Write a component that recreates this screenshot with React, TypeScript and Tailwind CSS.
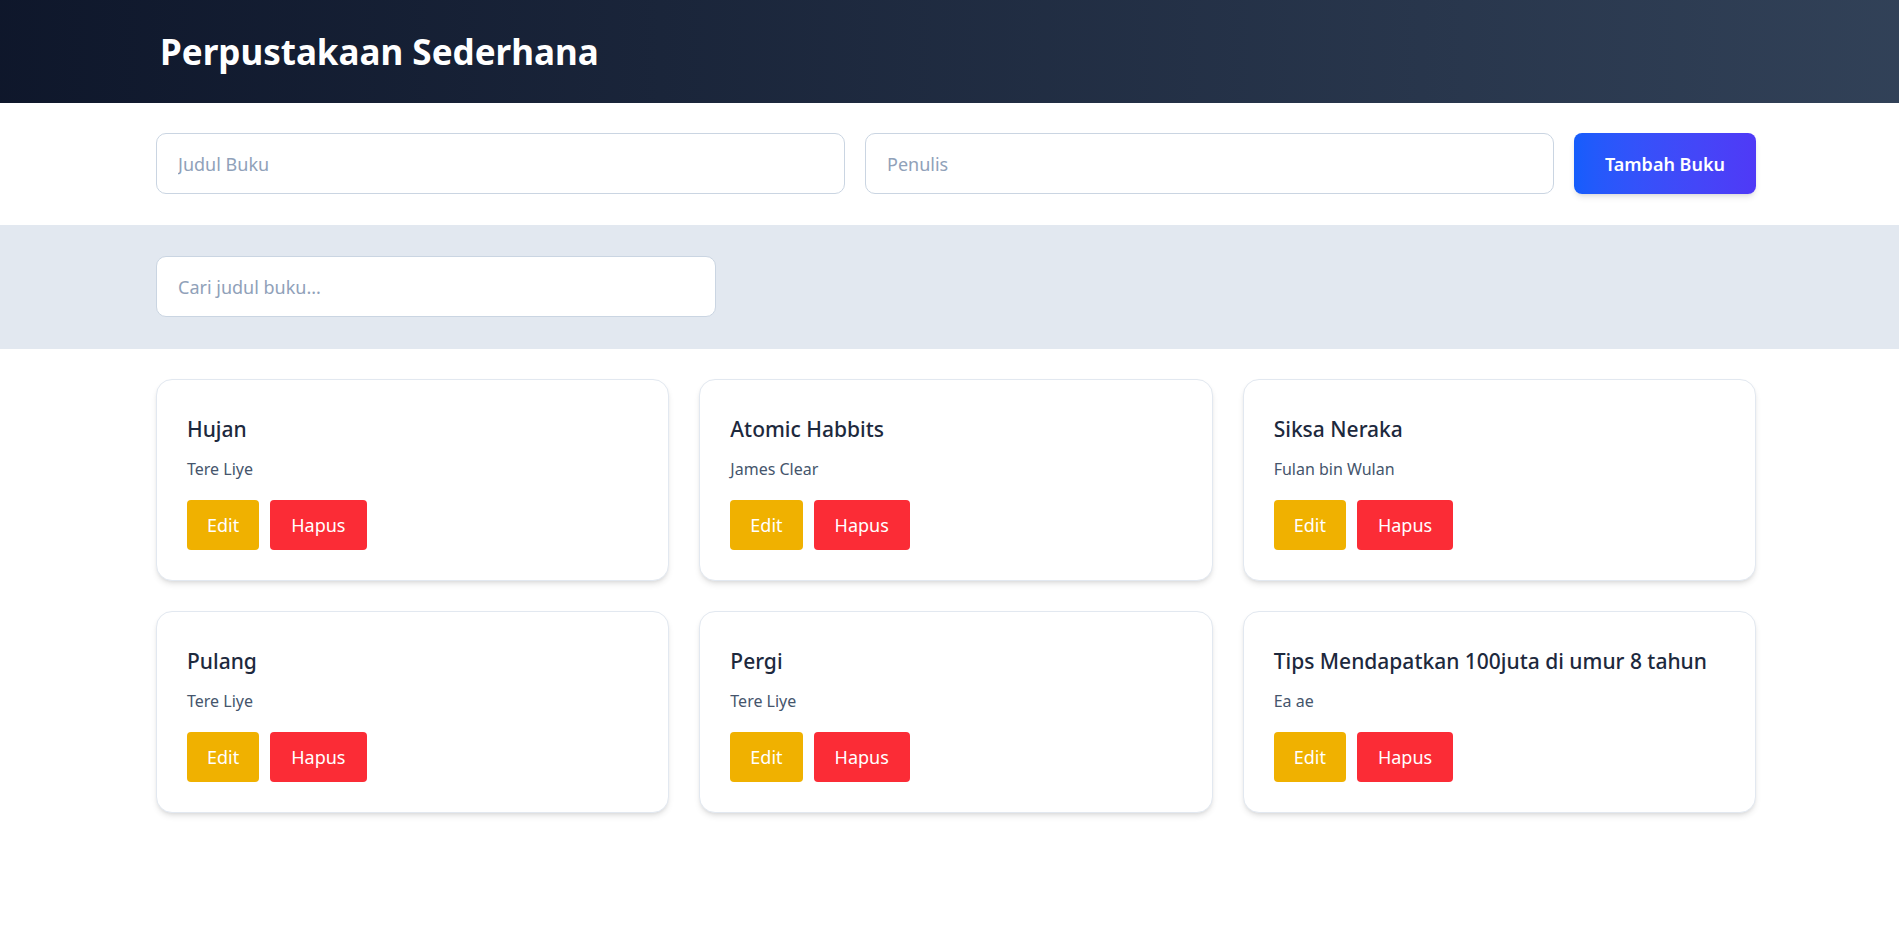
import { useState } from "react";

type Buku = { id: number; judul: string; penulis: string };

const awal: Buku[] = [
  { id: 1, judul: "Hujan", penulis: "Tere Liye" },
  { id: 2, judul: "Atomic Habbits", penulis: "James Clear" },
  { id: 3, judul: "Siksa Neraka", penulis: "Fulan bin Wulan" },
  { id: 4, judul: "Pulang", penulis: "Tere Liye" },
  { id: 5, judul: "Pergi", penulis: "Tere Liye" },
  { id: 6, judul: "Tips Mendapatkan 100juta di umur 8 tahun", penulis: "Ea ae" },
];

export default function App() {
  const [buku, setBuku] = useState<Buku[]>(awal);
  const [judul, setJudul] = useState("");
  const [penulis, setPenulis] = useState("");
  const [cari, setCari] = useState("");

  const tambah = () => {
    if (!judul || !penulis) return;
    setBuku([...buku, { id: Date.now(), judul, penulis }]);
    setJudul("");
    setPenulis("");
  };

  const hapus = (id: number) => setBuku(buku.filter((b) => b.id !== id));

  const tampil = buku.filter((b) =>
    b.judul.toLowerCase().includes(cari.toLowerCase()),
  );

  return (
    <div className="min-h-screen bg-white font-['Segoe_UI','Noto_Sans',sans-serif]">
      <header className="flex h-[103px] items-center bg-linear-to-r from-slate-900 to-slate-700">
        <div className="ml-[156px] w-[1600px] pl-[4px]">
          <h1 className="text-[35px] font-bold leading-10 text-white">
            Perpustakaan Sederhana
          </h1>
        </div>
      </header>

      <section className="pt-[30px] pb-[31px]">
        <div className="ml-[156px] flex w-[1600px] gap-5">
          <input
            value={judul}
            onChange={(e) => setJudul(e.target.value)}
            placeholder="Judul Buku"
            className="h-[61px] flex-1 rounded-[10px] border border-slate-300 px-[21px] text-lg text-slate-800 placeholder:text-slate-400 outline-none"
          />
          <input
            value={penulis}
            onChange={(e) => setPenulis(e.target.value)}
            placeholder="Penulis"
            className="h-[61px] flex-1 rounded-[10px] border border-slate-300 px-[21px] text-lg text-slate-800 placeholder:text-slate-400 outline-none"
          />
          <button
            type="button"
            onClick={tambah}
            className="h-[61px] w-[182px] rounded-lg bg-linear-to-r from-blue-600 to-indigo-600 text-lg font-semibold text-white shadow-md"
          >
            Tambah Buku
          </button>
        </div>
      </section>

      <section className="bg-slate-200 pt-[31px] pb-[32px]">
        <div className="ml-[156px] w-[1600px]">
          <input
            value={cari}
            onChange={(e) => setCari(e.target.value)}
            placeholder="Cari judul buku..."
            className="h-[61px] w-[560px] rounded-[10px] border border-slate-300 bg-white px-[21px] text-lg text-slate-800 placeholder:text-slate-400 outline-none"
          />
        </div>
      </section>

      <main className="ml-[156px] grid w-[1600px] grid-cols-3 gap-[30px] pt-[30px] pb-10">
        {tampil.map((b) => (
          <div
            key={b.id}
            className="rounded-2xl border border-slate-200 bg-white p-[30px] shadow-md"
          >
            <h2 className="mb-[9px] whitespace-nowrap text-[21px] font-medium leading-[38px] text-slate-800">
              {b.judul}
            </h2>
            <p className="mb-[19px] text-base leading-6 text-slate-600">{b.penulis}</p>
            <div className="flex gap-[11px]">
              <button
                type="button"
                className="h-[50px] rounded bg-yellow-500 px-5 text-lg text-white"
              >
                Edit
              </button>
              <button
                type="button"
                onClick={() => hapus(b.id)}
                className="h-[50px] rounded bg-red-500 px-[21px] text-lg text-white"
              >
                Hapus
              </button>
            </div>
          </div>
        ))}
      </main>
    </div>
  );
}
